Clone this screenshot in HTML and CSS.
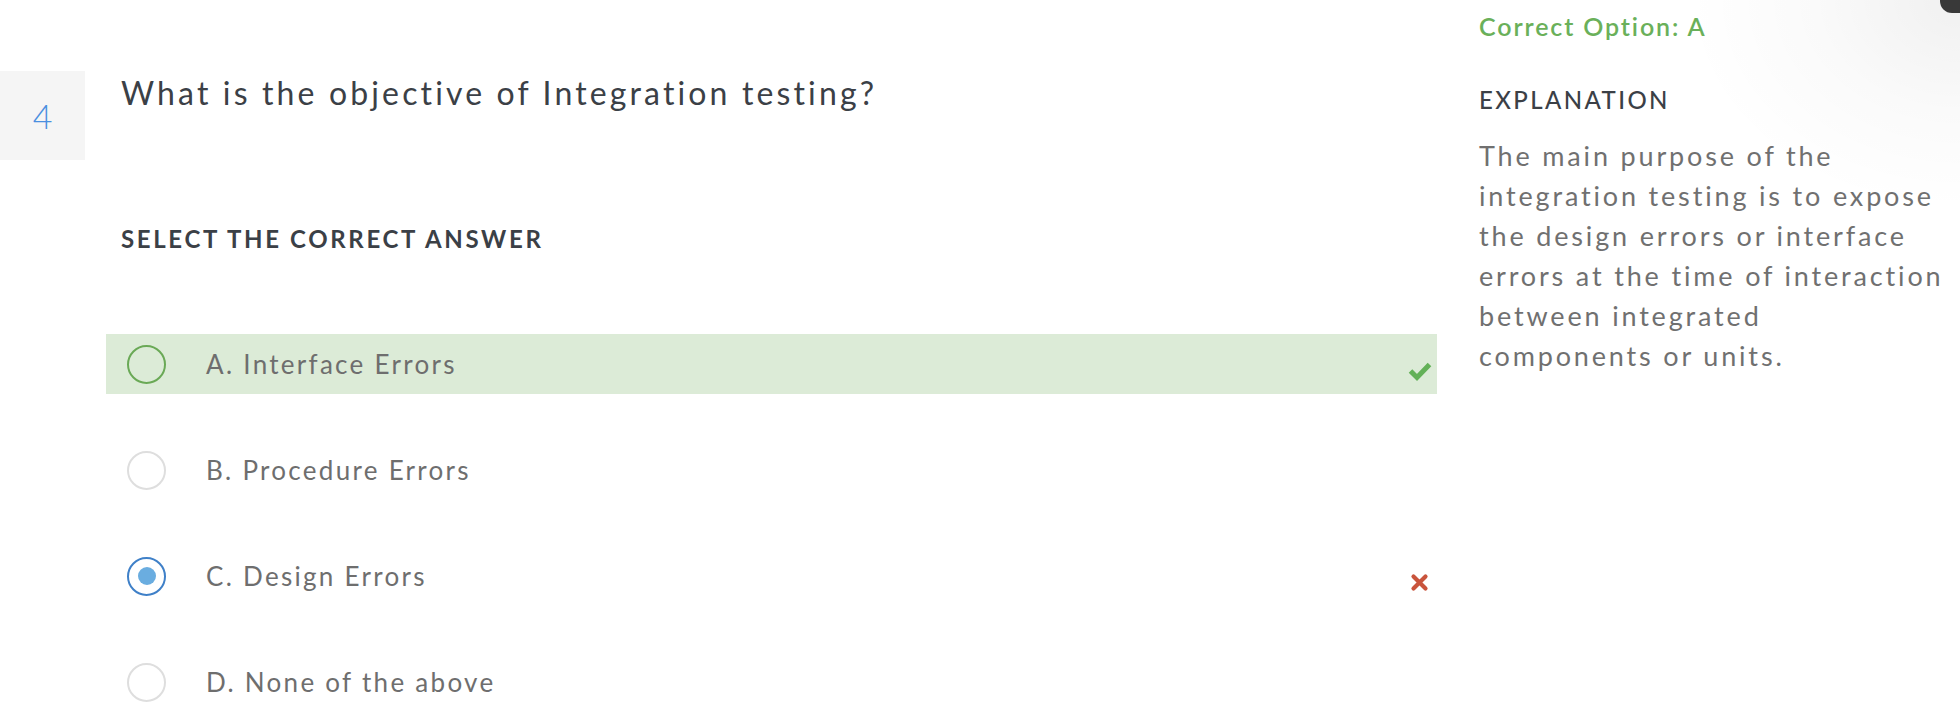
FILE: index.html
```html
<!DOCTYPE html>
<html lang="en">
<head>
<meta charset="utf-8">
<title>Question 4</title>
<link rel="stylesheet" href="styles.css">
</head>
<body>
<div class="page">
  <div class="qnum">4</div>
  <main class="quiz">
    <h1 class="question">What is the objective of Integration testing?</h1>
    <h2 class="label">SELECT THE CORRECT ANSWER</h2>
    <ul class="options">
      <li class="option correct">
        <span class="radio"></span>
        <span class="text">A. Interface Errors</span>
        <svg class="mark" viewBox="0 0 24 24"><polyline points="2.5,12 9,18.5 21.5,5.5" fill="none" stroke="#63b158" stroke-width="5"/></svg>
      </li>
      <li class="option">
        <span class="radio"></span>
        <span class="text">B. Procedure Errors</span>
      </li>
      <li class="option selected">
        <span class="radio"></span>
        <span class="text">C. Design Errors</span>
        <svg class="mark" viewBox="0 0 24 24"><path d="M5.5 5.5 L17.5 17.5 M17.5 5.5 L5.5 17.5" fill="none" stroke="#c9543c" stroke-width="4.2" stroke-linecap="round"/></svg>
      </li>
      <li class="option">
        <span class="radio"></span>
        <span class="text">D. None of the above</span>
      </li>
    </ul>
  </main>
  <aside class="side">
    <div class="correct-option">Correct Option: A</div>
    <h3 class="exp-title">EXPLANATION</h3>
    <p class="exp-text">The main purpose of the integration testing is to expose the design errors or interface errors at the time of interaction between integrated components or units.</p>
  </aside>
  <div class="glow"></div>
  <div class="corner"></div>
</div>
</body>
</html>
```
FILE: styles.css
```css
html, body {
  margin: 0;
  padding: 0;
  background: #ffffff;
}

body {
  font-family: Lato, "Open Sans", sans-serif;
}

.page {
  position: relative;
  display: flex;
  align-items: flex-start;
  width: 1960px;
  height: 724px;
  overflow: hidden;
}

.qnum {
  flex: none;
  width: 85px;
  height: 89px;
  margin-top: 71px;
  background: #f5f5f5;
  display: flex;
  align-items: center;
  justify-content: center;
  color: #4a8fe0;
  font-size: 34px;
  font-weight: 300;
}

.quiz {
  flex: none;
  width: 1331px;
  margin-left: 21px;
  padding-top: 73px;
}

.question {
  margin: 0 0 0 15px;
  font-size: 32px;
  line-height: 40px;
  font-weight: 400;
  color: #3b4046;
  letter-spacing: 0.098em;
}

.label {
  margin: 111px 0 0 15px;
  font-size: 24px;
  line-height: 30px;
  font-weight: 700;
  color: #3b4046;
  letter-spacing: 0.11em;
}

.options {
  list-style: none;
  margin: 80px 0 0;
  padding: 0;
  display: flex;
  flex-direction: column;
  gap: 46px;
}

.option {
  height: 60px;
  display: flex;
  align-items: center;
  padding: 0 5px 0 21px;
}

.option.correct {
  background: #dcebd7;
}

.radio {
  flex: none;
  width: 39px;
  height: 39px;
  box-sizing: border-box;
  border: 2px solid #dedede;
  border-radius: 50%;
  display: flex;
  align-items: center;
  justify-content: center;
}

.correct .radio {
  border-color: #6aa956;
}

.selected .radio {
  border-color: #3f80c8;
}

.selected .radio::after {
  content: "";
  width: 18px;
  height: 18px;
  border-radius: 50%;
  background: #6aade0;
}

.text {
  flex: 1;
  margin-left: 40px;
  font-size: 26px;
  line-height: 30px;
  color: #6e6e6e;
  letter-spacing: 0.088em;
}

.mark {
  flex: none;
  width: 24px;
  height: 24px;
  margin-top: 14px;
}

.side {
  flex: none;
  width: 466px;
  margin-left: 42px;
  padding-top: 11px;
}

.correct-option {
  font-size: 25px;
  line-height: 30px;
  font-weight: 600;
  color: #6ab05a;
  letter-spacing: 0.075em;
}

.exp-title {
  margin: 44px 0 0;
  font-size: 24px;
  line-height: 30px;
  font-weight: 500;
  color: #3b4046;
  letter-spacing: 0.1em;
}

.exp-text {
  margin: 21px 0 0;
  font-size: 27px;
  line-height: 40px;
  color: #707070;
  letter-spacing: 0.105em;
}

.glow {
  position: absolute;
  top: 0;
  right: 0;
  width: 260px;
  height: 200px;
  background: radial-gradient(ellipse at 100% 0%, rgba(0, 0, 0, 0.06) 0%, rgba(0, 0, 0, 0.02) 40%, rgba(0, 0, 0, 0) 75%);
  pointer-events: none;
}

.corner {
  position: absolute;
  top: 0;
  right: 0;
  width: 20px;
  height: 13px;
  background: #393939;
  border-bottom-left-radius: 12px;
}
```
